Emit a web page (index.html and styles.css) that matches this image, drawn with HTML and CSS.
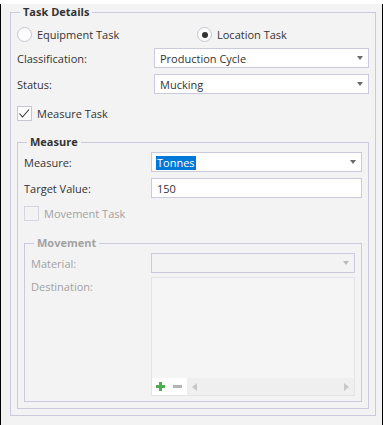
FILE: index.html
```html
<!DOCTYPE html>
<html lang="en">

<head>
    <meta charset="UTF-8">
    <title>Task Details</title>
    <link rel="stylesheet" href="styles.css">
</head>

<body>
    <div class="window">
        <fieldset class="group group-task">
            <legend>Task Details</legend>

            <div class="radios">
                <label class="radio"><span class="radio-dot"></span>Equipment Task</label>
                <label class="radio is-checked"><span class="radio-dot"></span>Location Task</label>
            </div>

            <div class="field field-first">
                <span class="field-label">Classification:</span>
                <div class="combo"><span class="combo-text">Production Cycle</span><span class="combo-arrow"></span></div>
            </div>
            <div class="field">
                <span class="field-label">Status:</span>
                <div class="combo"><span class="combo-text">Mucking</span><span class="combo-arrow"></span></div>
            </div>

            <label class="check check-measure">
                <span class="check-box">
                    <svg width="15" height="15" viewBox="0 0 15 15"><polyline points="2.5,7.5 5.5,11 12,3.5" fill="none" stroke="#333" stroke-width="1.1"/></svg>
                </span>
                Measure Task
            </label>

            <!-- measure group -->
            <fieldset class="group group-measure">
                <legend>Measure</legend>
                <div class="field field-first">
                    <span class="field-label">Measure:</span>
                    <div class="combo"><span class="combo-text"><span class="selected">Tonnes</span></span><span class="combo-arrow"></span></div>
                </div>
                <div class="field">
                    <span class="field-label">Target Value:</span>
                    <div class="textbox">150</div>
                </div>

                <label class="check check-movement is-disabled">
                    <span class="check-box"></span>
                    Movement Task
                </label>

                <!-- movement group, disabled -->
                <fieldset class="group group-movement is-disabled">
                    <legend>Movement</legend>
                    <div class="field field-first">
                        <span class="field-label">Material:</span>
                        <div class="combo"><span class="combo-text"></span><span class="combo-arrow"></span></div>
                    </div>
                    <div class="field field-list">
                        <span class="field-label">Destination:</span>
                        <div class="list">
                            <div class="list-bar">
                                <div class="list-buttons">
                                    <svg width="9" height="9" viewBox="0 0 9 9"><rect x="3" y="0" width="3" height="9" fill="#4cae50"/><rect x="0" y="3" width="9" height="3" fill="#4cae50"/></svg>
                                    <svg width="9" height="9" viewBox="0 0 9 9"><rect x="0" y="3" width="9" height="3" fill="#b4b4b4"/></svg>
                                </div>
                                <div class="list-scroll">
                                    <span class="arrow-left"></span>
                                    <span class="arrow-right"></span>
                                </div>
                            </div>
                        </div>
                    </div>
                </fieldset>
            </fieldset>
        </fieldset>
    </div>
</body>

</html>
```

FILE: styles.css
```css
* {
    box-sizing: border-box;
}

body {
    margin: 0;
    background: #fff;
    font-family: "Open Sans", "Noto Sans", sans-serif;
    font-size: 11px;
    color: #333;
}

.window {
    width: 383px;
    height: 425px;
    background: #f3f3f3;
    border: 1px solid #000;
    border-top: none;
    padding: 0 6px 0 9px;
}

/* group boxes */
.group {
    margin: 0;
    min-width: 0;
    border: 1px solid #cacadc;
    padding: 0 6px 6px;
}

.group legend {
    margin-left: 3px;
    padding: 0 3px;
    line-height: 16px;
    font-weight: 700;
}

.group-task {
    margin-top: 4px;
}

.group-measure {
    margin-top: 13px;
}

.group-movement {
    margin-top: 14px;
    padding-bottom: 5px;
}

.is-disabled,
.is-disabled legend {
    color: #a2a2a2;
}

/* radios */
.radios {
    display: grid;
    grid-template-columns: 180px 1fr;
    margin-top: 7px;
    height: 15px;
}

.radio {
    display: flex;
    align-items: center;
    gap: 5px;
    line-height: 15px;
}

.radio-dot {
    width: 15px;
    height: 15px;
    border: 1px solid #c6c6d2;
    border-radius: 50%;
    background: #fcfcfc;
    display: flex;
    align-items: center;
    justify-content: center;
}

.is-checked .radio-dot::after {
    content: "";
    width: 6px;
    height: 6px;
    border-radius: 50%;
    background: #333;
}

/* label + control rows */
.field {
    display: grid;
    grid-template-columns: 137px 1fr;
    align-items: center;
    margin-top: 6px;
}

.field-first {
    margin-top: 2px;
}

.group-task > .field-first {
    margin-top: 6px;
}

.group-measure .field {
    grid-template-columns: 127px 1fr;
}

.group-movement .field {
    grid-template-columns: 120px 1fr;
}

.combo,
.textbox {
    height: 20px;
    border: 1px solid #cacadc;
    background: #fff;
    display: flex;
    align-items: center;
    padding: 0 5px;
    white-space: nowrap;
}

.combo-text {
    flex: 1;
}

.combo-arrow {
    width: 0;
    height: 0;
    border-top: 4px solid #6a6a6a;
    border-left: 3.5px solid transparent;
    border-right: 3.5px solid transparent;
}

.selected {
    background: #0078d7;
    color: #fff;
    line-height: 14px;
    display: inline-block;
    padding: 0 1px;
    margin-left: -1px;
}

.is-disabled .combo {
    background: #f3f3f3;
}

.is-disabled .combo-arrow {
    border-top-color: #bbb;
}

/* checkboxes */
.check {
    display: flex;
    align-items: center;
    gap: 5px;
    height: 15px;
}

.check-measure {
    margin-top: 12px;
}

.check-movement {
    margin-top: 8px;
}

.check-box {
    width: 15px;
    height: 15px;
    border: 1px solid #c6c6d2;
    background: #fcfcfc;
}

.check-box svg {
    display: block;
    margin: -1px;
}

.is-disabled .check-box {
    border-color: #d6d6e0;
    background: #f3f3f3;
}

/* destination list */
.field-list {
    align-items: start;
    margin-top: 4px;
}

.field-list .field-label {
    margin-top: 2px;
}

.list {
    height: 119px;
    border: 1px solid #e4e4e8;
    background: #f5f5f5;
    display: flex;
    flex-direction: column;
    justify-content: flex-end;
}

.list-bar {
    display: flex;
    height: 17px;
}

.list-buttons {
    width: 35px;
    background: #fff;
    display: flex;
    align-items: center;
    gap: 8px;
    padding-left: 4px;
}

.list-scroll {
    flex: 1;
    background: #efefef;
    display: flex;
    align-items: center;
    justify-content: space-between;
    padding: 0 5px;
}

.arrow-left {
    border-right: 5px solid #c8c8c8;
    border-top: 4px solid transparent;
    border-bottom: 4px solid transparent;
}

.arrow-right {
    border-left: 5px solid #c8c8c8;
    border-top: 4px solid transparent;
    border-bottom: 4px solid transparent;
}
```
